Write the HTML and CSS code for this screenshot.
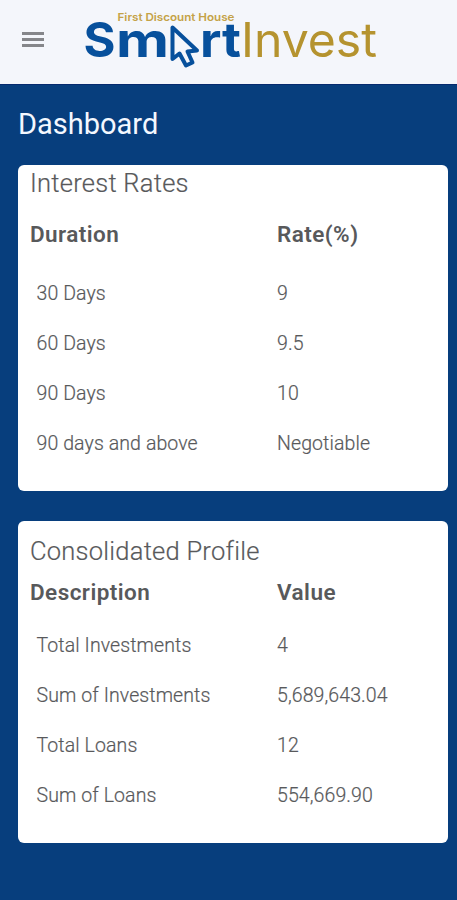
FILE: index.html
```html
<!DOCTYPE html>
<html lang="en">
  <head>
    <meta charset="UTF-8" />
    <meta name="viewport" content="width=device-width, initial-scale=1.0" />
    <title>SmartInvest</title>
    <link rel="stylesheet" href="styles.css">
  </head>
  <body>
    <header class="topbar">
      <button class="menu" aria-label="Menu">
        <span></span>
        <span></span>
        <span></span>
      </button>
      <svg class="logo" viewBox="80 0 304 80" role="img" aria-label="Smart Invest">
        <text class="tagline" x="117.5" y="21" textLength="117" lengthAdjust="spacingAndGlyphs">First Discount House</text>
        <text class="smart" x="83.5" y="57" textLength="32" lengthAdjust="spacingAndGlyphs">S</text>
        <text class="smart" x="116" y="57" textLength="53" lengthAdjust="spacingAndGlyphs">m</text>
        <path class="cursor" d="M172.5 27.5V59L179.5 53.5L186 65.5L192.5 62.5L187.5 51.5L197 50.5Z" />
        <text class="smart" x="200" y="57" textLength="41" lengthAdjust="spacingAndGlyphs">rt</text>
        <text class="invest" x="241" y="57" textLength="136" lengthAdjust="spacingAndGlyphs">Invest</text>
      </svg>
    </header>
    <main>
      <h1>Dashboard</h1>
      <section class="card rates">
        <h2>Interest Rates</h2>
        <table>
          <thead>
            <tr><th>Duration</th><th>Rate(%)</th></tr>
          </thead>
          <tbody>
            <tr><td>30 Days</td><td>9</td></tr>
            <tr><td>60 Days</td><td>9.5</td></tr>
            <tr><td>90 Days</td><td>10</td></tr>
            <tr><td>90 days and above</td><td>Negotiable</td></tr>
          </tbody>
        </table>
      </section>
      <section class="card profile">
        <h2>Consolidated Profile</h2>
        <table>
          <thead>
            <tr><th>Description</th><th>Value</th></tr>
          </thead>
          <tbody>
            <tr><td>Total Investments</td><td>4</td></tr>
            <tr><td>Sum of Investments</td><td>5,689,643.04</td></tr>
            <tr><td>Total Loans</td><td>12</td></tr>
            <tr><td>Sum of Loans</td><td>554,669.90</td></tr>
          </tbody>
        </table>
      </section>
    </main>
  </body>
</html>
```
FILE: styles.css
```css
* {
  padding: 0;
  margin: 0;
  box-sizing: border-box;
}
body {
  min-height: 100vh;
  background-color: #073e7d;
  color: #58595b;
  font-family: Roboto, Arial, sans-serif;
}
.topbar {
  height: 85px;
  display: flex;
  align-items: flex-start;
  background-color: #f4f6fb;
  border-bottom: 1px solid #062a6e;
}
.menu {
  width: 22px;
  margin: 32px 36px 0 22px;
  display: flex;
  flex-direction: column;
  gap: 3px;
  border: 0;
  background: none;
}
.menu span {
  width: 22px;
  height: 3px;
  background-color: #85868a;
}
.logo {
  width: 304px;
  height: 80px;
}
.logo text {
  font-family: Inter, sans-serif;
}
.logo .tagline {
  font-size: 11px;
  font-weight: 600;
  fill: #c4a247;
}
.logo .smart {
  font-size: 48px;
  font-weight: 700;
  fill: #07509c;
}
.logo .invest {
  font-size: 48px;
  font-weight: 400;
  fill: #b5932f;
}
.cursor {
  fill: #f4f6fb;
  stroke: #07509c;
  stroke-width: 4;
  stroke-linejoin: round;
}
main {
  padding: 20px 9px 0 18px;
}
h1 {
  height: 60px;
  line-height: 38px;
  font-size: 29px;
  font-weight: 400;
  color: #f4f8ff;
}
.card {
  padding: 0 12px;
  background-color: #fff;
  border-radius: 6px;
}
.rates {
  height: 326px;
  margin-bottom: 30px;
}
.profile {
  height: 322px;
  padding-top: 12px;
}
h2 {
  line-height: 37px;
  font-size: 25.5px;
  font-weight: 300;
  letter-spacing: 0.25px;
  -webkit-text-stroke: 0.2px;
}
table {
  width: 100%;
  table-layout: fixed;
  border-collapse: collapse;
}
th {
  height: 66px;
  padding-bottom: 2px;
  font-size: 22.5px;
  font-weight: 600;
  letter-spacing: 0.45px;
  text-align: left;
}
th:first-child {
  width: 247px;
}
.profile th {
  height: 43px;
  padding-bottom: 0;
}
td {
  height: 50px;
  font-size: 19.5px;
  font-weight: 300;
  letter-spacing: 0.1px;
  -webkit-text-stroke: 0.2px;
}
td:first-child {
  padding-left: 6.5px;
}
.profile tbody::before {
  content: "";
  display: table-row;
  height: 7px;
}
```
